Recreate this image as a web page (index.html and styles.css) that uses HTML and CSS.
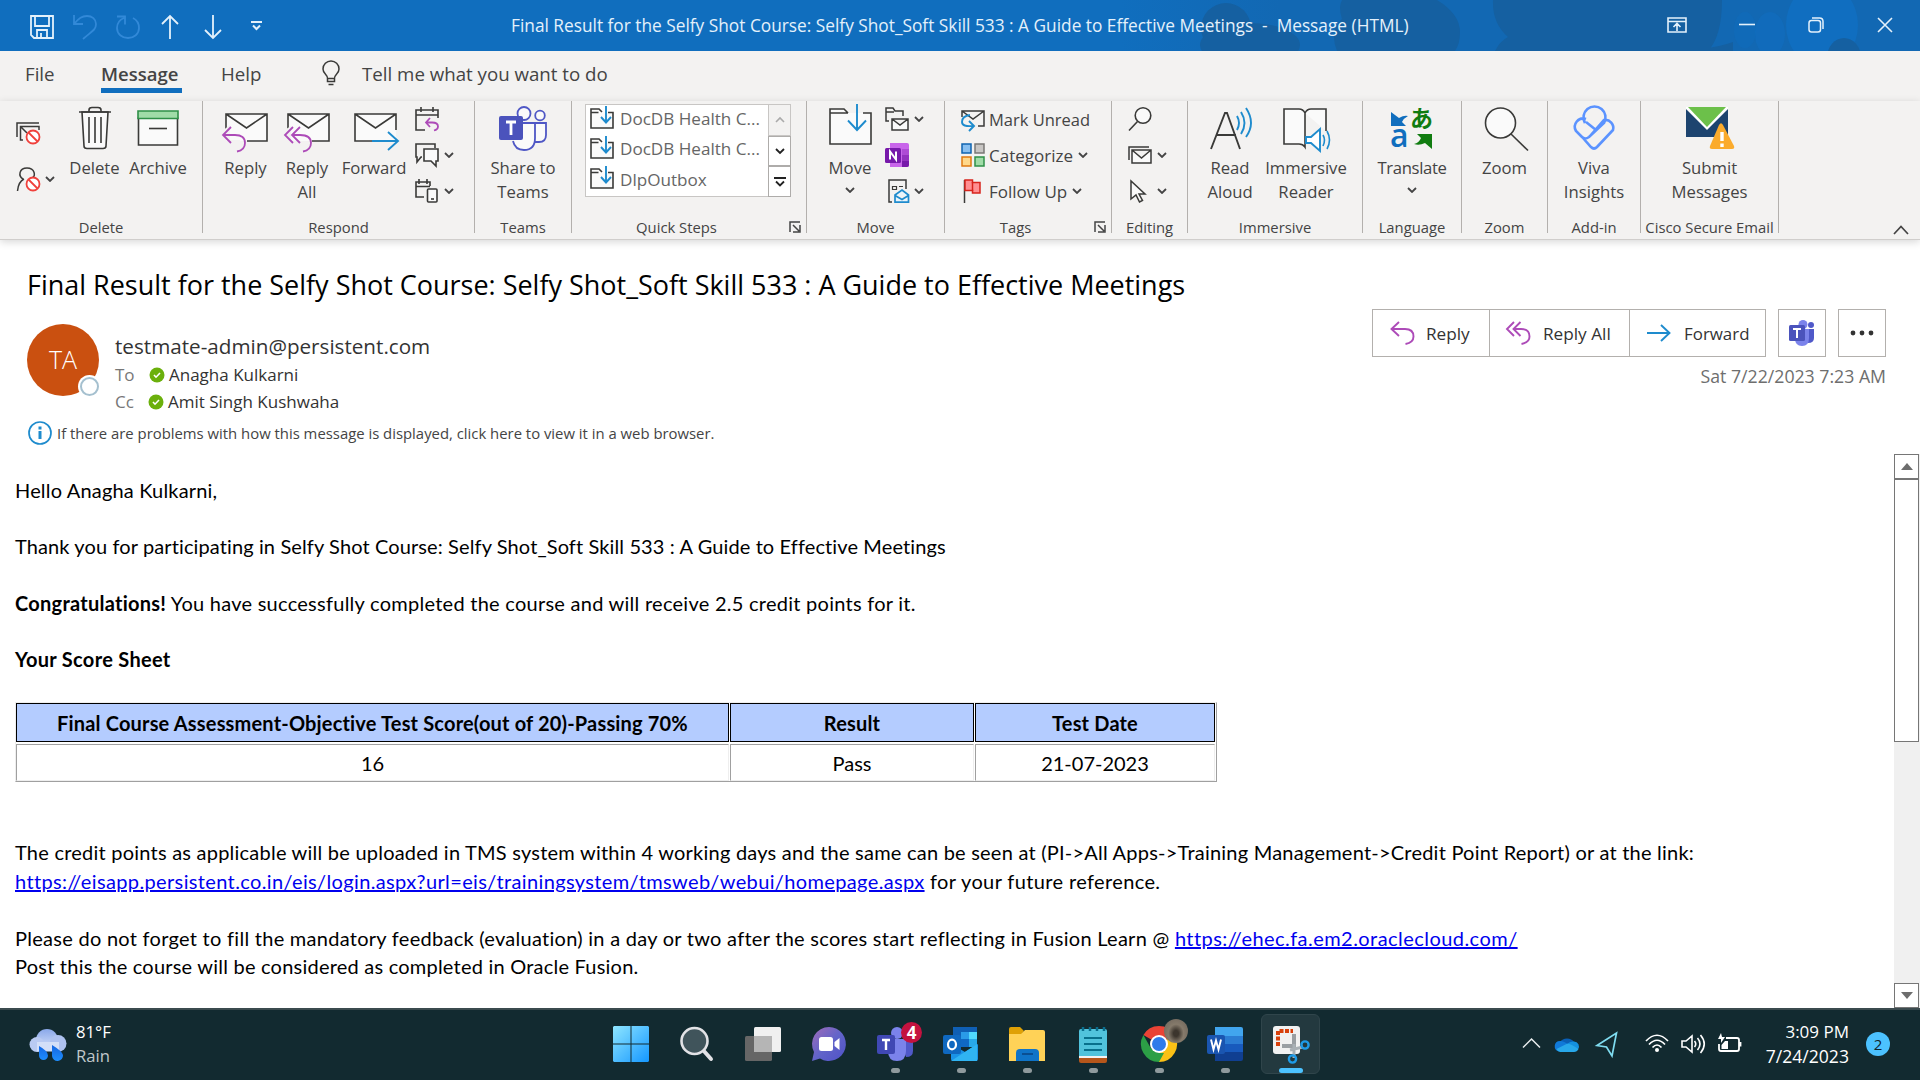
FILE: index.html
```html
<!DOCTYPE html>
<html lang="en">
<head>
<meta charset="utf-8">
<title>Final Result for the Selfy Shot Course - Message (HTML)</title>
<link rel="stylesheet" href="styles.css">
</head>
<body>
<svg class="defs" width="0" height="0">
  <symbol id="chev" viewBox="0 0 10 6"><path d="M1 1l4 4 4-4" fill="none" stroke="#444" stroke-width="1.8"/></symbol>
  <symbol id="launch" viewBox="0 0 12 12"><path d="M1 11V1h10M4 4l6 6M11 4v7H4" fill="none" stroke="#444" stroke-width="1.5"/></symbol>
  <symbol id="folder" viewBox="0 0 24 24"><path d="M8.500 6.500H1V22h22V6.500h-5M1 6.500V3h8l3 3" fill="#fafafa" stroke="#3a3a38" stroke-width="1.6"/><path d="M16 0v16M11 11l5 5.500 5-5.500" fill="none" stroke="#1e8bcd" stroke-width="1.9"/></symbol>
</svg>

<header class="titlebar">
  <svg class="title-art" viewBox="1120 0 800 51" width="800" height="51">
    <defs><linearGradient id="ta"><stop offset="0" stop-color="#1268b3" stop-opacity="0"/><stop offset=".2" stop-color="#1268b3"/><stop offset="1" stop-color="#1268b3"/></linearGradient></defs>
    <path d="M1120 0h800v51h-800z" fill="url(#ta)"/>
    <g fill="#1560a1"><ellipse cx="1226" cy="28" rx="25" ry="25"/><ellipse cx="1250" cy="45" rx="50" ry="22"/><path d="M1342 0h95q23 14 23 32 0 12-5 19h-118q-8-20 5-32-4-12 0-19zM1493 0h229q0 36-14 51h-213q5-10 13-14-16-14-15-37zM1660 51q48 0 73-9v9z"/></g>
    <g fill="#106ec0"><ellipse cx="1822" cy="25" rx="36" ry="42"/><ellipse cx="1770" cy="34" rx="15" ry="22" opacity=".6"/><ellipse cx="1745" cy="30" rx="11" ry="18" opacity=".4"/></g>
    <ellipse cx="1844" cy="58" rx="17" ry="20" fill="#1560a1"/>
  </svg>
  <div class="quick-access">
    <svg width="24" height="24" fill="none" stroke="#e4f1fb" stroke-width="1.8"><path d="M1 1h22v22H4l-3-3zM5 1v10h14V1M7 23v-8h10v8M11 23v-5"/></svg>
    <svg width="24" height="24" fill="none" stroke="#3289d8" stroke-width="1.8"><path d="M1 0v9h9M1 9C6 3 9 1 14 1c5 0 9 3 9 8 0 6-4 7-13 15"/></svg>
    <svg width="24" height="24" fill="none" stroke="#3289d8" stroke-width="1.8"><path d="M1 1.500h8v8M8 3C3 5 1 8.500 1 13c0 6 5 10 11 10s11-4 11-10c0-5-2-8-6-10"/></svg>
    <svg width="18" height="24" fill="none" stroke="#e4f1fb" stroke-width="1.8"><path d="M9 24V1M1 9l8-8 8 8"/></svg>
    <svg width="18" height="24" fill="none" stroke="#e4f1fb" stroke-width="1.8"><path d="M9 0v23M1 15l8 8 8-8"/></svg>
    <svg width="11" height="10" fill="none" stroke="#e4f1fb" stroke-width="2"><path d="M0 1h11M2 4.500l3.500 3.500L9 4.500"/></svg>
  </div>
  <div class="window-title">Final Result for the Selfy Shot Course: Selfy Shot_Soft Skill 533 : A Guide to Effective Meetings&nbsp; -&nbsp; Message (HTML)</div>
  <div class="window-controls">
    <svg width="20" height="16" fill="none" stroke="#e4f1fb" stroke-width="1.6"><path d="M1 1h18v14H1zM1 4.500h18M10 14V7M6.500 10L10 6.500l3.500 3.500"/></svg>
    <svg width="16" height="16" stroke="#e4f1fb" stroke-width="1.6"><path d="M0 7.500h16"/></svg>
    <svg width="16" height="16" fill="none" stroke="#e4f1fb" stroke-width="1.5"><rect x="1" y="3.500" width="11.500" height="11.500" rx="2.500"/><path d="M4 1h7.500q3.500 0 3.500 3.500V12"/></svg>
    <svg width="16" height="16" stroke="#e4f1fb" stroke-width="1.6"><path d="M1 1l14 14M15 1L1 15"/></svg>
  </div>
</header>

<nav class="tabs">
  <span class="tab tab-file">File</span>
  <span class="tab tab-message">Message</span>
  <span class="tab tab-help">Help</span>
  <svg class="bulb" width="18" height="25" fill="none" stroke="#3a3a38" stroke-width="1.5"><path d="M5.500 17.500C5.500 13 1 13 1 8a8 8 0 0 1 16 0c0 5-4.500 5-4.500 9.500zM5.500 17.500v3h7v-3M6.500 23.500h5"/></svg>
  <span class="tell">Tell me what you want to do</span>
</nav>

<section class="ribbon">
  <div class="group g-delete">
    <div class="items">
      <div class="smalls">
        <div class="small"><svg width="24" height="24" fill="none" stroke="#3a3a38" stroke-width="1.5"><path d="M1 17V3h22M7 20H4.500V6.500H23V10M5 7l6 6"/><circle cx="17" cy="17" r="6.500" fill="#fff" stroke="#f0413c" stroke-width="1.800"/><path d="M12.500 12.500l9 9" stroke="#f0413c" stroke-width="1.800"/></svg></div>
        <div class="small"><svg width="24" height="24" fill="none" stroke="#3a3a38" stroke-width="1.5"><path d="M7 12C2 9 3 1 11 1s9 8 5 10M8 12c-4 2-6 6-6.500 12"/><circle cx="17" cy="17" r="6.500" fill="#fff" stroke="#f0413c" stroke-width="1.800"/><path d="M12.500 12.500l9 9" stroke="#f0413c" stroke-width="1.800"/></svg><svg class="chev"><use href="#chev"/></svg></div>
      </div>
      <div class="big b-delete"><svg width="48" height="48" fill="none" stroke="#3a3a38" stroke-width="1.6"><path d="M11 9h26l-2 34q0 2.500-3 2.500H16q-3 0-3-2.500z" fill="#fafafa"/><path d="M8 9h32M18 9V7q0-2.500 3-2.500h6q3 0 3 2.500v2M18 14v26M24 14v26M30 14v26"/></svg><span>Delete</span></div>
      <div class="big b-archive"><svg width="48" height="48"><path d="M4.500 15h39v27h-39z" fill="#fafafa" stroke="#3a3a38" stroke-width="1.600"/><path d="M4 8h40v7.500H4z" fill="#a0dca8" stroke="#2f9048" stroke-width="1.600"/><path d="M15 25.500h18" stroke="#3a3a38" stroke-width="1.600"/></svg><span>Archive</span></div>
    </div>
    <div class="label"><span>Delete</span></div>
  </div>

  <div class="group g-respond">
    <div class="items">
      <div class="big b-reply"><svg width="48" height="48" fill="none" stroke="#3a3a38" stroke-width="1.6"><path d="M4 11h41v27H4z" fill="#fafafa" stroke="none"/><path d="M4 26V11h41v27H25M4 11l20.500 14L45 11"/><path d="M0 28l8-6v15h10v10H10z" fill="#f3f2f1" stroke="none"/><path d="M9 24l-8 8 8 8M1 32h12q10 0 10 8 0 7-8 8.500" stroke="#ad4bb8" stroke-width="1.800"/></svg><span>Reply</span></div>
      <div class="big b-replyall"><svg width="48" height="48" fill="none" stroke="#3a3a38" stroke-width="1.6"><path d="M5 11h41v27H5z" fill="#fafafa" stroke="none"/><path d="M5 26V11h41v27H29M5 11l20.500 14L46 11"/><path d="M0 28l8-5v15h10v10H10z" fill="#f3f2f1" stroke="none"/><path d="M10 24l-8 8 8 8M17 24l-8 8 8 8M9 32h8q11 0 11 8 0 7-8 8.500" stroke="#ad4bb8" stroke-width="1.800"/></svg><span>Reply<br>All</span></div>
      <div class="big b-forward"><svg width="48" height="48" fill="none" stroke="#3a3a38" stroke-width="1.6"><path d="M5 11h41v27H5z" fill="#fafafa" stroke="none"/><path d="M22 38H5V11h41v16M5 11l20.500 14L46 11"/><path d="M22 38h26M38 29l10 9-10 9" stroke="#1e8bcd" stroke-width="1.900"/></svg><span>Forward</span></div>
      <div class="smalls">
        <div class="small"><svg width="24" height="24" fill="none" stroke="#3a3a38" stroke-width="1.6"><path d="M10 23H1V3h22v8M1 8h22M6 0v5M18 0v5"/><path d="M15 11l-4 4.500 4 4.500M11 15.500h6q6 0 6 4 0 3-4 4" stroke="#ad4bb8" stroke-width="1.800"/></svg></div>
        <div class="small"><svg width="24" height="24" fill="none" stroke="#3a3a38" stroke-width="1.6"><path d="M7 14H6l-4 5v-5H1V1h19v4"/><path d="M9 6h14v12h-2v5l-5-5H9z" fill="#fafafa"/></svg><svg class="chev"><use href="#chev"/></svg></div>
        <div class="small"><svg width="24" height="24" fill="none" stroke="#3a3a38" stroke-width="1.6"><path d="M9 18H1V3h14v4M1 7.500h14M4 0v5M12 0v5"/><rect x="12.500" y="10" width="9.500" height="13" rx="1" fill="#fafafa"/><path d="M16 20h3"/></svg><svg class="chev"><use href="#chev"/></svg></div>
      </div>
    </div>
    <div class="label"><span>Respond</span></div>
  </div>

  <div class="group g-teams">
    <div class="items">
      <div class="big"><svg width="48" height="48" fill="none" stroke="#4f57c5" stroke-width="1.8"><circle cx="25" cy="10.500" r="6.500" fill="#fafafa"/><circle cx="41" cy="12.500" r="4.800" fill="#fafafa"/><path d="M36 20h11v12q0 7-7 7h-4" fill="#fafafa"/><path d="M14 20h22v15q0 12-11 12-9 0-11-9" fill="#fafafa"/><rect x="0" y="13" width="24" height="24" rx="2" fill="#4b53bc" stroke="none"/><path d="M7 19h10M12 19v13" stroke="#fff" stroke-width="2.800"/></svg><span>Share to<br>Teams</span></div>
    </div>
    <div class="label"><span>Teams</span></div>
  </div>

  <div class="group g-quick">
    <div class="items">
      <div class="gallery">
        <div class="steps">
          <div class="step"><svg width="24" height="24"><use href="#folder"/></svg><span>DocDB Health C...</span></div>
          <div class="step"><svg width="24" height="24"><use href="#folder"/></svg><span>DocDB Health C...</span></div>
          <div class="step"><svg width="24" height="24"><use href="#folder"/></svg><span>DlpOutbox</span></div>
        </div>
        <div class="scrollers">
          <div class="sc off"><svg width="10" height="6"><path d="M1 5l4-4 4 4" fill="none" stroke="#aaa" stroke-width="1.600"/></svg></div>
          <div class="sc"><svg width="10" height="6"><path d="M1 1l4 4 4-4" fill="none" stroke="#222" stroke-width="1.800"/></svg></div>
          <div class="sc"><svg width="12" height="10"><path d="M0 1h12M2 4.500l4 4 4-4" fill="none" stroke="#222" stroke-width="1.800"/></svg></div>
        </div>
      </div>
    </div>
    <div class="label"><span>Quick Steps</span><svg class="launch"><use href="#launch"/></svg></div>
  </div>

  <div class="group g-move">
    <div class="items">
      <div class="big"><svg width="48" height="48" fill="none" stroke="#3a3a38" stroke-width="1.6"><path d="M22 10H4v31h41V10h-8M4 10V6h14l4 4" fill="#fafafa"/><path d="M31 1v26M22 17.500l9 9.500 9-9.500" stroke="#1e8bcd" stroke-width="1.900"/></svg><span>Move</span><svg class="chev under"><use href="#chev"/></svg></div>
      <div class="smalls">
        <div class="small"><svg width="24" height="24" fill="none" stroke="#3a3a38" stroke-width="1.5"><path d="M4 14H1V1h7l2 3h8v5M1 5h8"/><path d="M7 12h16v11H7zM7 12l8 6 8-6" fill="#fafafa"/></svg><svg class="chev"><use href="#chev"/></svg></div>
        <div class="small"><svg width="24" height="24"><path d="M5 0h17q2 0 2 2v20q0 2-2 2H5z" fill="#c865ea"/><path d="M17 6h7v6h-7z" fill="#ae4bd5"/><path d="M17 12h7v6h-7z" fill="#9332bf"/><path d="M5 18h19v4q0 2-2 2H5z" fill="#7719aa"/><path d="M5 18h12v6H5z" fill="#c865ea"/><rect y="5" width="16" height="15" rx="1.500" fill="#7719aa"/><path d="M5 16.500V8.500l6 8v-8" fill="none" stroke="#fff" stroke-width="2"/></svg></div>
        <div class="small"><svg width="24" height="24" fill="none" stroke="#3a3a38" stroke-width="1.5"><path d="M7 23H4V1h17v9"/><path d="M7.500 7.500h4v3h-4zM14 7.500h4" stroke-width="1.200"/><path d="M10 16l7-5 6.500 5v7.200H10zM10 16.500l7 4 6.500-4" fill="#eaf5fc" stroke="#1e8bcd" stroke-width="1.700"/></svg><svg class="chev"><use href="#chev"/></svg></div>
      </div>
    </div>
    <div class="label"><span>Move</span></div>
  </div>

  <div class="group g-tags">
    <div class="items">
      <div class="smalls">
        <div class="small"><svg width="24" height="24" fill="none" stroke="#3a3a38" stroke-width="1.5"><path d="M1 10V4h22v15h-6M1 4l11 8 11-8"/><path d="M9 8q-8 1-8 7 0 5 11 4M8 14l5 5-5 5" stroke="#1e8bcd" stroke-width="1.900"/></svg><span class="t1">Mark Unread</span></div>
        <div class="small"><svg width="24" height="24" stroke-width="1.500"><path d="M1 1h9v9H1z" fill="#88bff0" stroke="#0f64b0"/><path d="M14 1h9v9h-9z" fill="#c8c6c4" stroke="#7a7876"/><path d="M1 14h9v9H1z" fill="#ffd88a" stroke="#e07a10"/><path d="M14 14h9v9h-9z" fill="#a0dca8" stroke="#2f9048"/></svg><span>Categorize</span><svg class="chev"><use href="#chev"/></svg></div>
        <div class="small"><svg width="24" height="24" stroke-width="1.500"><path d="M3.500 1v23" stroke="#3a3a38"/><path d="M4 1h7.500v2.500H19V14h-7.500v-2.500H4z" fill="#ff8f92" stroke="#d8241c"/><path d="M11.500 3v9" stroke="#d8241c"/></svg><span>Follow Up</span><svg class="chev"><use href="#chev"/></svg></div>
      </div>
    </div>
    <div class="label"><span>Tags</span><svg class="launch"><use href="#launch"/></svg></div>
  </div>

  <div class="group g-editing">
    <div class="items">
      <div class="smalls">
        <div class="small"><svg width="24" height="24" fill="none" stroke="#3a3a38" stroke-width="1.6"><circle cx="15" cy="8.500" r="7.800" fill="#fafafa"/><path d="M9.500 14.500L1 23.500"/></svg></div>
        <div class="small"><svg width="24" height="24" fill="none" stroke="#3a3a38" stroke-width="1.500"><path d="M1 17V4h20"/><path d="M4 7h19v13H4zM4 7l9.500 8L23 7" fill="#fafafa"/></svg><svg class="chev"><use href="#chev"/></svg></div>
        <div class="small"><svg width="24" height="24" fill="#fafafa" stroke="#3a3a38" stroke-width="1.500"><path d="M3 2v18l5-4 3.500 7 3-1.500-3.500-6.500h6z"/></svg><svg class="chev"><use href="#chev"/></svg></div>
      </div>
    </div>
    <div class="label"><span>Editing</span></div>
  </div>

  <div class="group g-immersive">
    <div class="items">
      <div class="big b-read"><svg width="48" height="48" fill="none" stroke="#3a3a38" stroke-width="1.900"><path d="M5 46L19 10h2l13 36M10 32h20"/><path d="M31 13q4 7 0 14M35 9q7 11 0 22M40 5q10 15 0 29" stroke="#1e8bcd"/></svg><span>Read<br>Aloud</span></div>
      <div class="big b-reader"><svg width="48" height="48" fill="none" stroke="#3a3a38" stroke-width="1.600"><path d="M23 10q-2-4-6-4H2v35h15q4 0 6 3V10q2-4 6-4h15v22M23 10v30" fill="#fafafa"/><path d="M24 34h5l9-8v22l-9-8h-5z" fill="#fff" stroke="#1e8bcd" stroke-width="1.900"/><path d="M41 32q3 5 0 11M45 28q5 9 0 18" stroke="#1e8bcd"/></svg><span>Immersive<br>Reader</span></div>
    </div>
    <div class="label"><span>Immersive</span></div>
  </div>

  <div class="group g-language">
    <div class="items">
      <div class="big"><div class="translate"><svg width="48" height="48"><path d="M3 9v14h15l-4-4q2-4 6-6-4-1-9 2z" fill="#106ebe"/><path d="M44 46V31H29l4 4q-2 5-7 6 5 2 11-1z" fill="#107c10"/></svg><span class="ja">あ</span><span class="la">a</span></div><span class="tr">Translate</span><svg class="chev under"><use href="#chev"/></svg></div>
    </div>
    <div class="label"><span>Language</span></div>
  </div>

  <div class="group g-zoom">
    <div class="items">
      <div class="big"><svg width="48" height="48" fill="none" stroke="#3a3a38" stroke-width="1.600"><circle cx="19.500" cy="20" r="15" fill="#fafafa"/><path d="M30 31l17 16.500"/></svg><span>Zoom</span></div>
    </div>
    <div class="label"><span>Zoom</span></div>
  </div>

  <div class="group g-viva">
    <div class="items">
      <div class="big"><svg width="48" height="48" fill="none" stroke="#5b93ff" stroke-width="2.600"><path d="M15 20a11 11 0 1 1 19 0L19 34q-4 3-7 0L6 28a8.300 8.300 0 0 1 10-12M16 19l10 8M13 35l8 9q3 3 6 0l16-17A8 8 0 0 0 34 17L20 33"/></svg><span>Viva<br>Insights</span></div>
    </div>
    <div class="label"><span>Add-in</span></div>
  </div>

  <div class="group g-cisco">
    <div class="items">
      <div class="big"><svg width="48" height="48"><path d="M0 5h42v29H0z" fill="#1d446f"/><path d="M0 4h42v2L21 27 0 6z" fill="#fff"/><path d="M2 4h38L21 24z" fill="#6cc04a"/><path d="M33 22q2-3.500 4 0L48 43q1 3-2 3H26q-3 0-2-3z" fill="#fbab2c"/><path d="M36 29v9M36 40.500v3.500" stroke="#fff" stroke-width="3.400"/></svg><span>Submit<br>Messages</span></div>
    </div>
    <div class="label"><span>Cisco Secure Email</span></div>
  </div>
  <svg class="collapse" width="16" height="10"><path d="M1 9l7-7.500L15 9" fill="none" stroke="#444" stroke-width="1.700"/></svg>
</section>

<section class="message-head">
  <h1><span>Final Result for the Selfy Shot Course: Selfy Shot_Soft Skill 533 : A Guide to Effective Meetings</span></h1>
  <div class="head-row">
    <div class="avatar">TA<i class="presence"></i></div>
    <div class="people">
      <div class="from"><span>testmate-admin@persistent.com</span></div>
      <div class="person"><em>To</em><svg width="16" height="16"><circle cx="8" cy="8" r="7.500" fill="#6bb00c"/><path d="M5 8l2 2.200L11 6" fill="none" stroke="#fff" stroke-width="1.600"/></svg><span>Anagha Kulkarni</span></div>
      <div class="person cc"><em>Cc</em><svg width="16" height="16"><circle cx="8" cy="8" r="7.500" fill="#6bb00c"/><path d="M5 8l2 2.200L11 6" fill="none" stroke="#fff" stroke-width="1.600"/></svg><span>Amit Singh Kushwaha</span></div>
    </div>
    <div class="actions-col">
      <div class="actions">
        <div class="btn a-reply"><svg width="25" height="24" fill="none" stroke="#ad4bb8" stroke-width="1.900"><path d="M9 1L1.500 8 9 15M1.500 8H15q8.500 0 8.500 7.500 0 6-8 7.500"/></svg><span>Reply</span></div>
        <div class="btn a-all"><svg width="25" height="24" fill="none" stroke="#ad4bb8" stroke-width="1.900"><path d="M8 1L1 8l7 7M14.500 1l-7 7 7 7M7.500 8H15q8.500 0 8.500 7.500 0 6-8 7.500"/></svg><span>Reply All</span></div>
        <div class="btn a-fwd"><svg width="24" height="18" fill="none" stroke="#1e8bcd" stroke-width="1.900"><path d="M0 9h22M14 1l8.500 8L14 17"/></svg><span>Forward</span></div>
        <div class="btn a-teams"><svg width="26" height="26"><circle cx="22" cy="5" r="3" fill="#5059c9"/><path d="M14 9h11v9q0 5-6 5z" fill="#5059c9"/><circle cx="14" cy="4.500" r="4.500" fill="#7b83eb"/><path d="M6 9h14v9q0 8-7 8t-7-8z" fill="#7b83eb"/><rect y="5" width="16" height="16" rx="1.500" fill="#4b53bc"/><path d="M4 9h8M8 9v9" stroke="#fff" stroke-width="2"/></svg></div>
        <div class="btn a-more"><svg width="24" height="6" fill="#333"><circle cx="3" cy="3" r="2.400"/><circle cx="12" cy="3" r="2.400"/><circle cx="21" cy="3" r="2.400"/></svg></div>
      </div>
      <div class="date"><span>Sat 7/22/2023 7:23 AM</span></div>
    </div>
  </div>
  <div class="info"><svg width="24" height="24" fill="none" stroke="#1e8bcd"><circle cx="12" cy="12" r="11" stroke-width="1.700"/><path d="M12 10v8M12 5.500v3" stroke-width="3"/></svg><span>If there are problems with how this message is displayed, click here to view it in a web browser.</span></div>
</section>

<main class="reading">
  <article class="mail">
    <p><span class="m1">Hello Anagha Kulkarni,</span></p>
    <p><span class="m2">Thank you for participating in Selfy Shot Course: Selfy Shot_Soft Skill 533 : A Guide to Effective Meetings</span></p>
    <p><span class="m3"><b>Congratulations!</b> You have successfully completed the course and will receive 2.5 credit points for it.</span></p>
    <p><b class="m4">Your Score Sheet</b></p>
    <div class="score">
      <div class="th"><span>Final Course Assessment-Objective Test Score(out of 20)-Passing 70%</span></div><div class="th"><span>Result</span></div><div class="th"><span>Test Date</span></div>
      <div class="td">16</div><div class="td">Pass</div><div class="td">21-07-2023</div>
    </div>
    <p class="two"><span class="m5">The credit points as applicable will be uploaded in TMS system within 4 working days and the same can be seen at (PI-&gt;All Apps-&gt;Training Management-&gt;Credit Point Report) or at the link:</span><br><span class="m6"><a>https://eisapp.persistent.co.in/eis/login.aspx?url=eis/trainingsystem/tmsweb/webui/homepage.aspx</a> for your future reference.</span></p>
    <p class="two"><span class="m7">Please do not forget to fill the mandatory feedback (evaluation) in a day or two after the scores start reflecting in Fusion Learn @ <a>https://ehec.fa.em2.oraclecloud.com/</a></span><br><span class="m8">Post this the course will be considered as completed in Oracle Fusion.</span></p>
  </article>
  <div class="scrollbar">
    <div class="sb-btn"><svg width="12" height="7"><path d="M0 7l6-7 6 7z" fill="#6d6d6d"/></svg></div>
    <div class="thumb"></div>
    <div class="track"></div>
    <div class="sb-btn"><svg width="12" height="7"><path d="M0 0l6 7 6-7z" fill="#6d6d6d"/></svg></div>
  </div>
</main>

<footer class="taskbar">
  <div class="weather">
    <svg width="38" height="34"><defs><linearGradient id="cl" x2="0" y2="1"><stop offset="0" stop-color="#8aa8ea"/><stop offset="1" stop-color="#dbe6fb"/></linearGradient><linearGradient id="dr" x2="0" y2="1"><stop offset="0" stop-color="#1565e0"/><stop offset="1" stop-color="#1e8fff"/></linearGradient></defs><circle cx="18" cy="12" r="11" fill="url(#cl)"/><circle cx="8" cy="16.500" r="7.500" fill="#b9caf2"/><circle cx="29" cy="15.500" r="8.500" fill="#aec2f0"/><path d="M8 14h22v9.500H8z" fill="#d3dff8"/><path d="M10 18q9 5 9 9.500a4.500 4.500 0 0 1-9 0zM23 17q10 6 11 10a5.300 5.300 0 0 1-11 1z" fill="url(#dr)"/></svg>
    <div class="wtext"><span class="w1">81°F</span><span class="w2">Rain</span></div>
  </div>
  <div class="apps">
    <div class="app"><svg width="36" height="36"><defs><linearGradient id="wn" x2="1" y2="1"><stop offset="0" stop-color="#8fe6ff"/><stop offset="1" stop-color="#1497ff"/></linearGradient></defs><path d="M1 0h16.500v17.500H0V1zM18.500 0H35l1 1v16.500H18.500zM0 18.500h17.500V36H1l-1-1zM18.500 18.500H36V35l-1 1H18.500z" fill="url(#wn)"/></svg></div>
    <div class="app"><svg width="36" height="36" fill="none" stroke="#e2e2e6"><path d="M24 24l8 9" stroke-width="4" stroke-linecap="round"/><circle cx="15.500" cy="15" r="13" fill="#40545b" stroke-width="2.600"/></svg></div>
    <div class="app"><svg width="36" height="36"><rect x="0" y="10" width="27" height="25" rx="1.500" fill="#666"/><rect x="9" y="1" width="27" height="25" rx="1.500" fill="#f0f0f0"/><path d="M9 10h18v16H9z" fill="#b5b5b5"/></svg></div>
    <div class="app"><svg width="36" height="36"><defs><linearGradient id="ch" x2="1" y2="1"><stop offset="0" stop-color="#a06bb8"/><stop offset=".5" stop-color="#6264c9"/><stop offset="1" stop-color="#4f52c8"/></linearGradient></defs><path d="M18 1a17 17 0 1 1-9 31.500L1 35l2-9A17 17 0 0 1 18 1z" fill="url(#ch)"/><rect x="8" y="11" width="14" height="14" rx="2.500" fill="#fff"/><path d="M23.500 16l5-4v12l-5-4z" fill="#fff"/></svg></div>
    <div class="app run"><svg width="36" height="36"><circle cx="20" cy="7" r="6" fill="#7b83eb"/><circle cx="32" cy="9" r="4" fill="#5059c9"/><path d="M24 13h12v12q0 6-7 6z" fill="#5059c9"/><path d="M11 13h18v12q0 10-9 10t-9-10z" fill="#7b83eb"/><rect y="9" width="18" height="19" rx="2" fill="#4048b4"/><path d="M5 14h8M9 14v10" stroke="#fff" stroke-width="2.400"/></svg><b class="badge">4</b></div>
    <div class="app run"><svg width="36" height="36"><path d="M10 1h24v20H10z" fill="#0f5fb4"/><path d="M18 6h8v7h-8z" fill="#2a9be8"/><path d="M26 6h8v7h-8z" fill="#50d9ff"/><path d="M18 13h8v8h-8z" fill="#1068c4"/><path d="M26 13h8v8h-8z" fill="#28a8ea"/><path d="M8 18l14 8 13-8v15q0 2-2 2H10q-2 0-2-2z" fill="#1a93e6"/><path d="M8 35l26-17v17z" fill="#30b4f2"/><rect y="9" width="18" height="19" rx="2" fill="#0f68c0"/><ellipse cx="9" cy="18.500" rx="4" ry="4.800" fill="none" stroke="#fff" stroke-width="2.200"/></svg></div>
    <div class="app run"><svg width="36" height="36"><path d="M0 3q0-2 2-2h9l4 4-3 4H0z" fill="#dfa106"/><path d="M0 8h12l4-4h18q2 0 2 2v29H0z" fill="#ffd257"/><path d="M7 35V27q0-4 4-4h15q4 0 4 4v8z" fill="#0f74c8"/><path d="M13 28h11" stroke="#0a4f92" stroke-width="2"/></svg></div>
    <div class="app run"><svg width="36" height="36"><path d="M4 31h28v4q0 2-2 2H6q-2 0-2-2z" fill="#b5561b"/><path d="M4 28h28v4H4z" fill="#f2f2f2"/><path d="M4 5q0-2 2-2h24q2 0 2 2v25H4z" fill="#51c3dc"/><path d="M9 12h18M9 18h18M9 24h18" stroke="#08708c" stroke-width="2"/><path d="M8 1v4M15 1v4M22 1v4M29 1v4" stroke="#0a6d8c" stroke-width="2.500"/></svg></div>
    <div class="app run"><svg width="36" height="36"><path d="M18 18L2.400 9A18 18 0 0 1 33.600 9z" fill="#ea4335"/><path d="M18 18L33.600 9A18 18 0 0 1 18 36z" fill="#fbc116"/><path d="M18 36A18 18 0 0 1 2.400 9L10 22.500l8 4.500 5 0z" fill="#2c9f46"/><circle cx="18" cy="18" r="9" fill="#fff"/><circle cx="18" cy="18" r="7" fill="#2f7bea"/></svg><i class="profile"></i></div>
    <div class="app run"><svg width="36" height="36"><path d="M8 1h26q2 0 2 2v7H8z" fill="#41a5ee"/><path d="M8 10h28v8H8z" fill="#2b7cd3"/><path d="M8 18h28v8H8z" fill="#185abd"/><path d="M8 26h28v7q0 2-2 2H8z" fill="#103f91"/><rect y="9" width="18" height="19" rx="2" fill="#1a55b0"/><path d="M4 13.500l2.500 10 2.500-9 2.500 9 2.500-10" fill="none" stroke="#fff" stroke-width="1.900"/></svg></div>
    <div class="app active"><svg width="38" height="38"><rect x="1" y="0" width="27" height="28" rx="3" fill="#f1f1f1"/><path d="M6 20V5h15" fill="none" stroke="#d8400c" stroke-width="4" stroke-dasharray="4 1.500"/><path d="M10 20h12V8" fill="none" stroke="#9a9fa3" stroke-width="4"/><path d="M31 21L18 24M22 32V18" stroke="#a9b0b5" stroke-width="3"/><circle cx="33" cy="19" r="3.600" fill="none" stroke="#1e9be8" stroke-width="2.400"/><circle cx="20.500" cy="33" r="3.600" fill="none" stroke="#1e9be8" stroke-width="2.400"/></svg></div>
  </div>
  <div class="tray">
    <svg width="19" height="10" fill="none" stroke="#e8eced" stroke-width="1.500"><path d="M1 9.500L9.500 1 18 9.500"/></svg>
    <svg class="cloud" width="24" height="16"><path d="M5 6a8 7 0 0 1 14 0l-7 5z" fill="#0a5fb5"/><path d="M5 5q4 0 9 4L4 15.500A5.300 5.300 0 0 1 5 5z" fill="#1079d8"/><path d="M19 5.500a5 5 0 0 1 4 8L12 8q3-3 7-2.500z" fill="#1490df"/><path d="M1.500 13l10-5q3-1 12 5-1.500 3-4.500 3H5q-2 0-3.500-3z" fill="#28a8ea"/></svg>
    <svg class="plane" width="22" height="26"><path d="M1 13.500L20.500 1 16 24l-5.500-9z" fill="none" stroke="#7fdcf0" stroke-width="1.700"/></svg>
    <svg class="wifi" width="24" height="19" fill="none" stroke="#fff" stroke-width="1.700"><path d="M1 7q11-11.500 22 0M4 10.500q8-8.500 16 0M7.500 13.500q4.500-5 9 0"/><circle cx="12" cy="16" r="2" fill="#fff" stroke="none"/></svg>
    <svg class="vol" width="25" height="20" fill="none" stroke="#fff" stroke-width="1.600"><path d="M1 7v6h4l6 5V2L5 7zM13.500 7q2.500 3 0 6M16.500 4q5 6 0 12M19.500 1q7.500 9 0 18"/></svg>
    <svg class="bat" width="25" height="20" fill="none" stroke="#fff" stroke-width="1.800"><path d="M9 5h11q2 0 2 2v9q0 2-2 2H4q-2 0-2-2v-5M23.500 9v4.500"/><path d="M4.500 16V12L8 8h3v8zM4 0L1 6h3v4l4-6H5z" fill="#fff" stroke="none"/></svg>
    <div class="clock"><span class="c1">3:09 PM</span><span class="c2">7/24/2023</span></div>
    <div class="notif">2</div>
  </div>
</footer>
</body>
</html>
```
FILE: styles.css
```css
* { box-sizing: border-box; }
body {
  margin: 0; width: 1920px; height: 1080px; overflow: hidden; background: #fff;
  font-family: "Open Sans", "Noto Sans", sans-serif; font-size: 16.7px; color: #444;
  display: flex; flex-direction: column; white-space: nowrap;
}
svg { display: block; flex: none; overflow: visible; }
.defs { position: absolute; }

.titlebar { position: relative; height: 51px; flex: none; background: #106ebe; color: #e4f1fb; display: flex; align-items: flex-start; }
.title-art { position: absolute; right: 0; top: 0; overflow: hidden; }
.quick-access { display: flex; width: 511px; padding: 15px 0 0 30px; }
.quick-access svg:nth-child(2) { margin-left: 19px; }
.quick-access svg:nth-child(3) { margin-left: 19px; }
.quick-access svg:nth-child(4) { margin-left: 21px; }
.quick-access svg:nth-child(5) { margin-left: 25px; }
.quick-access svg:nth-child(6) { margin: 6px 0 0 29px; }
.window-title { position: relative; line-height: 51px; width: 1156px; font-size: 17.3px; }
.window-controls { position: relative; display: flex; padding-top: 17px; }
.window-controls svg:nth-child(2) { margin-left: 52px; }
.window-controls svg:nth-child(3) { margin-left: 53px; }
.window-controls svg:nth-child(4) { margin-left: 53px; }

.tabs { height: 50px; flex: none; background: #f3f2f1; display: flex; font-size: 18.7px; line-height: 46px; padding-left: 25px; }
.tab-file { width: 76px; }
.tab-message { width: 81px; font-weight: 600; font-size: 18.5px; height: 42px; border-bottom: 5px solid #106ebe; }
.tab-help { margin-left: 39px; width: 101px; }
.bulb { margin-top: 10px; }
.tell { margin-left: 22px; }

.ribbon { height: 139px; flex: none; background: #f3f2f1; border-bottom: 1px solid #d0cecc; display: flex; box-shadow: 0 2px 8px rgba(0,0,0,.16); position: relative; }
.group { height: 132px; border-right: 1px solid #b3b0ad; display: grid; grid-template-rows: 116px 20px; }
.items { display: flex; }
.label { display: flex; line-height: 20px; font-size: 14.8px; }
.label span { flex: 1; text-align: center; }
.launch { width: 12px; height: 12px; margin: 4px 5px 0 8px; }
.chev { width: 10px; height: 6px; }
.big { display: flex; flex-direction: column; align-items: center; padding-top: 2px; line-height: 24px; text-align: center; }
.big > span { margin-top: 5px; }
.big .under { margin-top: 7px; }
.small { height: 36px; display: flex; align-items: center; }
.small .chev { margin-left: 5px; }
.g-delete { width: 203px; }
.g-delete .smalls { width: 52px; margin-left: 16px; padding-top: 7px; }
.g-delete .small { height: 47px; }
.b-delete { width: 53px; }
.b-archive { width: 74px; }
.g-respond { width: 272px; }
.b-reply { width: 61px; margin-left: 12px; }
.b-replyall { width: 62px; }
.b-forward { width: 72px; }
.g-respond .smalls { margin-left: 5px; }
.g-teams { width: 97px; }
.g-teams .big, .g-language .big, .g-zoom .big, .g-viva .big, .g-cisco .big { flex: 1; }
.g-quick { width: 235px; }
.gallery { margin: 3px 0 0 13px; width: 206px; height: 93px; border: 1px solid #c8c6c4; background: #fff; display: flex; }
.steps { flex: 1; padding-left: 4px; }
.step { height: 30.3px; display: flex; align-items: center; color: #666; gap: 6px; font-size: 17.1px; line-height: 28px; padding-bottom: 2px; }
.step svg { margin-top: -3px; }
.scrollers { width: 23px; margin: -1px; margin-left: 0; display: grid; grid-template-rows: 32px 30px 31px; }
.sc { border: 1px solid #aeacaa; background: #fff; display: flex; align-items: center; justify-content: center; }
.off { background: #f3f2f1; border-color: #c8c6c4; }
.g-move { width: 138px; }
.g-move .big { width: 64px; margin-left: 11px; }
.g-move .smalls { margin-left: 3px; }
.g-tags { width: 167px; }
.g-tags .smalls { margin-left: 16px; }
.g-tags .small span { margin-left: 4px; padding-top: 1px; font-size: 17px; }
.g-tags .small .t1 { font-size: 16.5px; }
.g-editing { width: 76px; }
.g-editing .smalls { margin-left: 16px; }
.g-immersive { width: 175px; }
.b-read { width: 70px; margin-left: 7px; }
.b-reader { width: 82px; }
.g-language { width: 99px; }
.g-zoom { width: 86px; }
.g-viva { width: 93px; }
.g-cisco { width: 138px; }
.tr { letter-spacing: -.35px; }
.translate { position: relative; height: 48px; }
.ja, .la { position: absolute; line-height: 24px; }
.ja { font: 700 23px/24px "Noto Sans CJK JP", sans-serif; color: #107c10; left: 22px; top: 2px; }
.la { font-size: 32px; color: #106ebe; left: 2px; top: 20px; font-weight: 600; }
.collapse { margin: 124px 0 0 114px; }

.message-head { height: 214px; flex: none; position: relative; }
h1 { margin: 0; padding: 26px 0 0 27px; font-weight: 400; font-size: 26.97px; line-height: 38px; color: #000; height: 68px; }
.head-row { display: flex; padding-left: 27px; height: 110px; }
.avatar { position: relative; width: 72px; height: 72px; margin-top: 16px; border-radius: 50%; background: #ca5010; color: #fff; font-size: 25px; font-weight: 300; line-height: 71px; text-align: center; }
.presence { position: absolute; left: 53px; top: 53px; width: 19px; height: 19px; border-radius: 50%; background: #fff; border: 2px solid #a5c0cf; box-shadow: 0 0 0 2px #fff; }
.people { width: 1273px; padding-left: 16px; }
.from { font-size: 20.65px; line-height: 31px; padding-top: 23px; color: #333; height: 53px; }
.person { display: flex; line-height: 28px; height: 27px; align-items: center; color: #333; font-size: 17px; }
.person em { font-style: normal; color: #777; width: 34px; }
.person svg { margin-right: 4px; }
.cc em { width: 33px; }
.actions { display: flex; padding-top: 1px; }
.btn { height: 48px; border: 1px solid #b3b0ad; display: flex; align-items: center; color: #333; font-size: 17.2px; }
.a-reply { width: 117px; padding-left: 17px; border-right: 0; }
.a-all { width: 140px; padding-left: 16px; border-right: 0; }
.a-fwd { width: 137px; padding-left: 17px; }
.a-reply span { margin-left: 11px; }
.a-all span { margin-left: 12px; }
.a-fwd span { margin-left: 13px; font-size: 16.9px; }
.a-teams, .a-more { width: 48px; margin-left: 12px; justify-content: center; }
.date { color: #6e6e6e; text-align: right; line-height: 24px; margin-top: 7px; font-size: 17.7px; }
.info { display: flex; align-items: center; height: 24px; padding-left: 28px; margin-top: 3px; gap: 5px; font-size: 14.87px; }

.reading { height: 554px; flex: none; display: flex; }
.mail { width: 1894px; padding: 22px 0 0 15px; font-family: Lato, "Noto Sans", sans-serif; font-size: 20px; line-height: 28.2px; color: #000; font-variant-ligatures: none; }
.m1 { letter-spacing: .17px; }
.m2 { letter-spacing: .115px; }
.m3 { letter-spacing: .26px; }
.m4 { letter-spacing: .3px; }
.m5 { letter-spacing: .227px; }
.m6 { letter-spacing: .366px; }
.m7 { letter-spacing: .274px; }
.m7 a { letter-spacing: .45px; }
.m8 { letter-spacing: .22px; }
p { margin: 0 0 28.2px; height: 28.2px; }
.two { height: 56.4px; margin-bottom: 29px; }
.two a { color: #00e; text-decoration: underline; }
.score { width: 1202px; height: 80px; margin: 29px 0 56px; border: 1px solid #eee; border-right-color: #a0a0a0; border-bottom-color: #a0a0a0; display: grid; grid-template-columns: 713px 244px 240px; grid-template-rows: 39px 38px; gap: 1px; line-height: 38px; text-align: center; }
.th { background: #b4ccff; border: 1px solid #000; font-weight: 700; letter-spacing: .17px; }
.td { border: 1px solid #a0a0a0; border-right-color: #eee; border-bottom-color: #eee; margin-top: 1px; line-height: 36px; }
.scrollbar { width: 26px; height: 554px; background: #f0f0f0; display: flex; flex-direction: column; }
.sb-btn { height: 25px; width: 25px; border: 1px solid #767676; background: #fff; display: flex; align-items: center; justify-content: center; }
.thumb { width: 25px; height: 263px; border: 1px solid #767676; background: #fff; }
.track { flex: 1; }

.taskbar { height: 72px; flex: none; background: #122a30; border-top: 2px solid #3b4b4f; display: flex; position: relative; color: #fff; }
.weather { width: 598px; display: flex; padding: 18px 0 0 29px; }
.wtext { margin: -8px 0 0 9px; display: flex; flex-direction: column; line-height: 24px; }
.w2 { color: #c0c8ca; }
.apps { display: flex; width: 733px; }
.app { position: relative; width: 66px; display: flex; justify-content: center; padding-top: 16px; }
.run::after { content: ""; position: absolute; left: 29px; top: 58px; width: 9px; height: 5px; border-radius: 3px; background: #8f9a9d; }
.active { width: 59px; height: 60px; margin: 4px 0 0 3px; padding-top: 11px; background: #23393f; border: 1px solid #30454b; border-radius: 6px; }
.active::after { content: ""; position: absolute; left: 17px; top: 53px; width: 24px; height: 5px; border-radius: 3px; background: #4cc2ff; }
.badge { position: absolute; left: 39px; top: 12px; width: 21px; height: 21px; border-radius: 50%; background: #c4123f; font-size: 17px; line-height: 21px; text-align: center; }
.profile { position: absolute; left: 38px; top: 9px; width: 24px; height: 24px; border-radius: 50%; background: radial-gradient(ellipse at 50% 60%, #3c352d 15%, #857a6b 45%, #766c60 75%); }
.tray { display: flex; margin-left: 191px; }
.tray svg { margin-top: 28px; }
.tray .cloud { margin: 26px 0 0 14px; }
.tray .plane { margin: 22px 0 0 17px; }
.tray .wifi { margin: 24px 0 0 27px; }
.tray .vol { margin: 24px 0 0 12px; }
.tray .bat { margin: 23px 0 0 11px; }
.clock { width: 107px; display: flex; flex-direction: column; align-items: flex-end; line-height: 24px; padding-top: 10px; font-size: 17px; }
.c2 { font-size: 17.6px; }
.notif { width: 24px; height: 24px; border-radius: 50%; background: #4cc2ff; color: #10242b; line-height: 24px; text-align: center; font-size: 15px; margin: 22px 0 0 17px; }
```
